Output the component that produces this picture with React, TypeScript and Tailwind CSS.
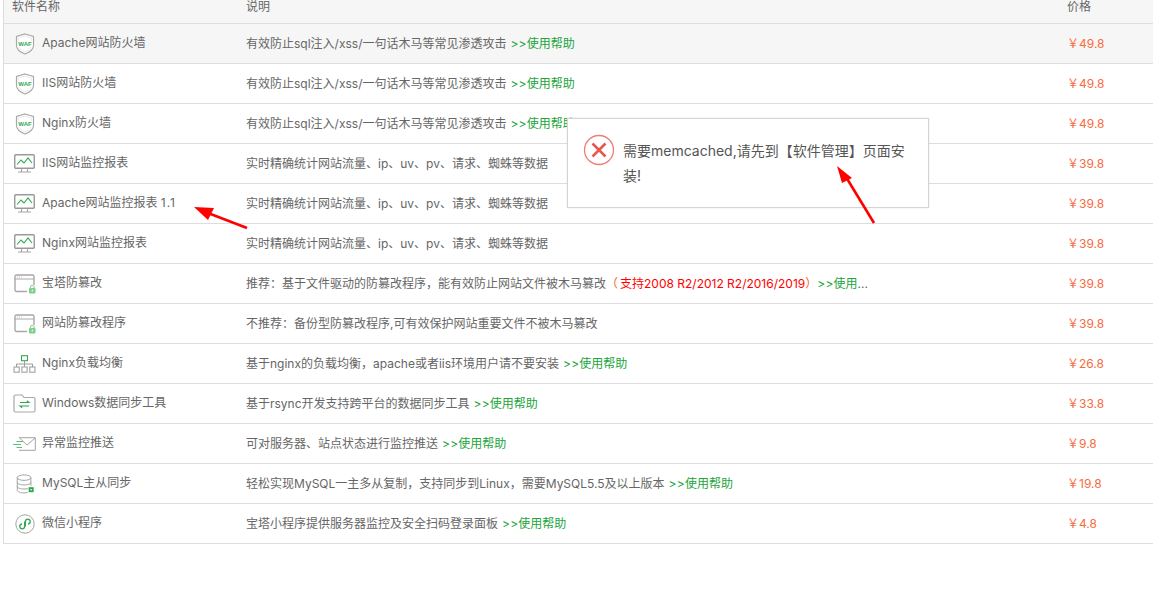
import React from "react";

const Waf = () => (
  <svg width="20" height="22" viewBox="0 0 20 22" fill="none">
    <path d="M10 1 L18.5 3.5 V12 C18.5 16.5 14 19.5 10 21 C6 19.5 1.5 16.5 1.5 12 V3.5 Z" stroke="#a8a8a8" strokeWidth="1.2" fill="#fff" />
    <path d="M10 3 L16.5 5 V11.5 C16.5 15 13 17.5 10 19 C7 17.5 3.5 15 3.5 11.5 V5 Z" stroke="#dcdcdc" strokeWidth="0.6" />
    <rect x="2.5" y="8" width="15" height="6" fill="#fff" />
    <text x="10" y="13" textAnchor="middle" fontSize="6" fontWeight="700" fill="#2fa84f" fontFamily="Liberation Sans, sans-serif">WAF</text>
  </svg>
);
const Monitor = () => (
  <svg width="21" height="19" viewBox="0 0 21 19" fill="none">
    <rect x="0.75" y="0.75" width="19.5" height="13.5" rx="1" stroke="#999" strokeWidth="1.4" />
    <path d="M3 10.5 L7 6 L10 9 L14 4 L18 9" stroke="#2fa84f" strokeWidth="1.1" />
    <path d="M7.5 14.5 V17.5 M13.5 14.5 V17.5 M4 18 H17" stroke="#a3a3a3" strokeWidth="1.1" />
  </svg>
);
const Tamper = () => (
  <svg width="22" height="20" viewBox="0 0 22 20" fill="none">
    <path d="M13 17.5 H2.5 A1.5 1.5 0 0 1 1 16 V2.5 A1.5 1.5 0 0 1 2.5 1 H18.5 A1.5 1.5 0 0 1 20 2.5 V11" stroke="#a8a8a8" strokeWidth="1.4" />
    <path d="M1 5 H20" stroke="#a8a8a8" strokeWidth="1" />
    <path d="M3 3 H9" stroke="#b8b8b8" strokeWidth="0.9" strokeDasharray="1 1" />
    <rect x="15" y="14" width="6.5" height="5.5" rx="0.8" fill="#7fcf8e" />
    <path d="M16.3 14 V12.9 A2 2 0 0 1 20.2 12.9 V14" stroke="#7fcf8e" strokeWidth="1" />
    <rect x="17.7" y="15.8" width="1.2" height="1.6" fill="#fff" />
  </svg>
);
const Balance = () => (
  <svg width="23" height="18" viewBox="0 0 23 18" fill="none">
    <rect x="8.5" y="0.7" width="6" height="5" stroke="#37a74f" strokeWidth="1.1" />
    <path d="M11.5 5.7 V11.5 M3.5 12 V9 H19.5 V12" stroke="#9a9a9a" strokeWidth="1" />
    <rect x="1" y="12" width="5.2" height="5.2" stroke="#9a9a9a" strokeWidth="1" />
    <rect x="8.9" y="12" width="5.2" height="5.2" stroke="#9a9a9a" strokeWidth="1" />
    <rect x="16.8" y="12" width="5.2" height="5.2" stroke="#9a9a9a" strokeWidth="1" />
  </svg>
);
const Folder = () => (
  <svg width="23" height="19" viewBox="0 0 23 19" fill="none">
    <path d="M1 2.5 A1.5 1.5 0 0 1 2.5 1 H9 L11 3.5 H20.5 A1.5 1.5 0 0 1 22 5 V16.5 A1.5 1.5 0 0 1 20.5 18 H2.5 A1.5 1.5 0 0 1 1 16.5 Z" stroke="#a8a8a8" strokeWidth="1.2" />
    <path d="M7 8.5 H16 L13.8 6.8 M16 12 H7 L9.2 13.8" stroke="#2fa84f" strokeWidth="1.1" />
  </svg>
);
const Mail = () => (
  <svg width="23" height="14" viewBox="0 0 23 14" fill="none">
    <path d="M6 0.7 H22.3 V13.3 H6" stroke="#a3a3a3" strokeWidth="1" />
    <path d="M6.5 1 L14 8 L22 1" stroke="#a3a3a3" strokeWidth="1" />
    <path d="M3.5 4.5 H10 M0 7.5 H8 M3.5 10.5 H9" stroke="#5dbf74" strokeWidth="1.2" />
  </svg>
);
const Db = () => (
  <svg width="20" height="20" viewBox="0 0 20 22" fill="none">
    <ellipse cx="9" cy="4" rx="7.5" ry="3" stroke="#a3a3a3" strokeWidth="1.1" />
    <path d="M1.5 4 V17.5 C1.5 19.5 5 20.8 9 20.8 C10.5 20.8 11.5 20.7 13 20.3 M16.5 4 V13 M1.5 9 C1.5 11 5 12 9 12 C13 12 16.5 11 16.5 9 M1.5 13.5 C1.5 15.5 5 16.5 9 16.5 C10.5 16.5 12 16.3 13 16" stroke="#a3a3a3" strokeWidth="1.1" />
    <rect x="14" y="14.5" width="5.5" height="5.5" fill="#2fa84f" />
    <rect x="16" y="16.5" width="1.5" height="1.5" fill="#fff" />
  </svg>
);
const Mini = () => (
  <svg width="20" height="20" viewBox="0 0 20 20" fill="none">
    <circle cx="10" cy="10" r="9.2" stroke="#a3a3a3" strokeWidth="1" />
    <path d="M9.6 7.5 V12.5 A2.4 2.4 0 1 1 7 10" stroke="#2fa84f" strokeWidth="1.3" />
    <path d="M10.4 12.5 V7.5 A2.4 2.4 0 1 1 13 10" stroke="#2fa84f" strokeWidth="1.3" />
  </svg>
);

const Help = () => (
  <span className="ml-[4px] text-[#20a53a]"><span className="tracking-[0.2px]">&gt;&gt;</span>使用帮助</span>
);

type Row = { icon: React.ReactNode; name: React.ReactNode; desc: React.ReactNode; price: string };
const wafDesc = <>有效防止sql注入/xss/一句话木马等常见渗透攻击<Help /></>;
const monDesc = "实时精确统计网站流量、ip、uv、pv、请求、蜘蛛等数据";

const rows: Row[] = [
  { icon: <Waf />, name: "Apache网站防火墙", desc: wafDesc, price: "49.8" },
  { icon: <Waf />, name: "IIS网站防火墙", desc: wafDesc, price: "49.8" },
  { icon: <Waf />, name: "Nginx防火墙", desc: wafDesc, price: "49.8" },
  { icon: <Monitor />, name: "IIS网站监控报表", desc: monDesc, price: "39.8" },
  { icon: <Monitor />, name: <>Apache网站监控报表 <span className="tracking-[1px]">1.1</span></>, desc: monDesc, price: "39.8" },
  { icon: <Monitor />, name: "Nginx网站监控报表", desc: monDesc, price: "39.8" },
  {
    icon: <Tamper />,
    name: "宝塔防篡改",
    desc: (
      <>
        推荐：基于文件驱动的防篡改程序，能有效防止网站文件被木马篡改
        <span className="text-[#ff0000]"><span className="mr-[2px] text-[#f0641e]">（</span>支持2008 R2/2012 R2/2016/2019<span className="text-[#f0641e]">）</span></span>
        <span className="text-[#20a53a]"><span className="tracking-[0.2px]">&gt;&gt;</span>使用</span>...
      </>
    ),
    price: "39.8",
  },
  { icon: <Tamper />, name: "网站防篡改程序", desc: "不推荐：备份型防篡改程序,可有效保护网站重要文件不被木马篡改", price: "39.8" },
  { icon: <Balance />, name: "Nginx负载均衡", desc: <>基于nginx的负载均衡，apache或者iis环境用户请不要安装<Help /></>, price: "26.8" },
  { icon: <Folder />, name: "Windows数据同步工具", desc: <>基于rsync开发支持跨平台的数据同步工具<Help /></>, price: "33.8" },
  { icon: <Mail />, name: "异常监控推送", desc: <>可对服务器、站点状态进行监控推送<Help /></>, price: "9.8" },
  { icon: <Db />, name: "MySQL主从同步", desc: <>轻松实现MySQL一主多从复制，支持同步到Linux，需要MySQL5.5及以上版本<Help /></>, price: "19.8" },
  { icon: <Mini />, name: "微信小程序", desc: <>宝塔小程序提供服务器监控及安全扫码登录面板<Help /></>, price: "4.8" },
];

const Price = ({ v }: { v: string }) => (
  <span className="text-[#f96a3e]">
    ￥{v}
  </span>
);

export default function App() {
  return (
    <div className="relative h-[597px] w-[1153px] overflow-hidden bg-white pl-[3px] text-[12px] text-[#666] [font-family:'Inter','Noto_Sans_CJK_SC',sans-serif]">
      <div className="border-l border-[#ddd]">
        <div className="flex h-[24px] items-start border-b border-[#ddd] bg-[#f6f6f6] pl-[8px] pt-[1px] leading-[12px]">
          <div className="w-[234px]">软件名称</div>
          <div className="flex-1">说明</div>
          <div className="w-[86px]">价格</div>
        </div>
        {rows.map((r, i) => (
          <div key={i} className={`flex h-[40px] items-center border-b border-[#ddd] ${i === 0 ? "bg-[#f6f6f6]" : ""}`}>
            <div className="flex w-[242px] items-center">
              <div className="flex w-[38px] shrink-0 justify-center pl-[3px]">{r.icon}</div>
              <span className="-mt-[2px]">{r.name}</span>
            </div>
            <div className="min-w-0 flex-1 whitespace-nowrap">{r.desc}</div>
            <div className="w-[86px]"><Price v={r.price} /></div>
          </div>
        ))}
      </div>

      <div className="absolute left-[567px] top-[118px] flex h-[90px] w-[362px] border border-[#d4d4d4] bg-white shadow-[0_0_2px_rgba(0,0,0,0.1)]">
        <svg className="absolute left-[15px] top-[15px]" width="32" height="32" viewBox="0 0 32 32" fill="none">
          <circle cx="16" cy="16" r="14.5" stroke="#ec7f76" strokeWidth="1.3" />
          <path d="M9.5 9.5 L22.5 22.5 M22.5 9.5 L9.5 22.5" stroke="#e8574d" strokeWidth="2.6" />
        </svg>
        <div className="ml-[55px] mt-[19px] w-[290px] text-[14px] leading-[25px] text-[#555]">
          需要memcached,请先到【软件管理】页面安装!
        </div>
      </div>

      <svg className="absolute left-0 top-0" width="1153" height="597" fill="none">
        <path d="M247 228 L208 213" stroke="#ff0000" strokeWidth="2.6" />
        <path d="M194 207 L214 208 L208 220 Z" fill="#ff0000" />
        <path d="M874 223 L846 177" stroke="#ff0000" strokeWidth="2.6" />
        <path d="M837 166 L852 178 L842 183 Z" fill="#ff0000" />
      </svg>
    </div>
  );
}
